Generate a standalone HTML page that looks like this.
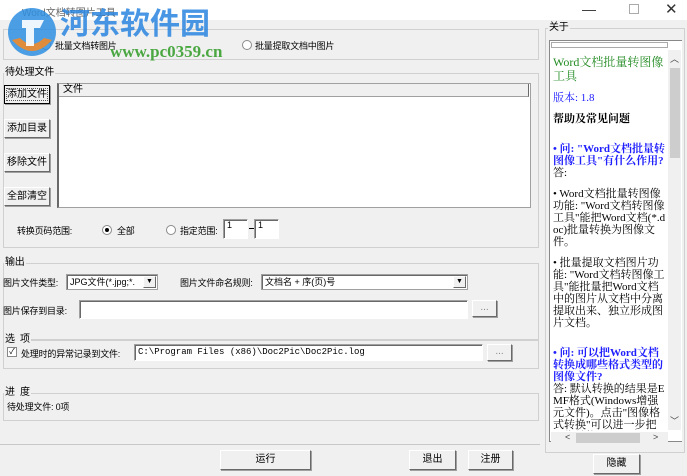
<!DOCTYPE html>
<html><head><meta charset="utf-8"><style>
*{margin:0;padding:0;box-sizing:border-box}
body{width:687px;height:476px;overflow:hidden;background:#f0f0f0;position:relative;font-family:"Liberation Sans","Noto Sans CJK SC",sans-serif;font-size:10px;color:#000}
.a{position:absolute;white-space:nowrap}
.l{font-size:9px;letter-spacing:-0.2px}
.gb{position:absolute;border:1px solid #d0d0d0;}
.gl{position:absolute;background:#f0f0f0;padding:0 1px;font-size:10px;line-height:12px}
.btn{position:absolute;background:#f0f0f0;border:1px solid;border-color:#fff #696969 #696969 #fff;box-shadow:1px 1px 0 #a0a0a0;text-align:center;font-size:10px}
.in{position:absolute;background:#fff;border:1px solid;border-color:#a0a0a0 #fff #fff #a0a0a0;box-shadow:inset 1px 1px 0 #696969;font-size:9px;padding-left:3px}
.rad{position:absolute;width:10px;height:10px;border-radius:50%;background:#fff;border:1px solid #8a8a8a}
.cmb{position:absolute;background:#fff;border:1px solid #a0a0a0;box-shadow:inset 1px 1px 0 #696969;font-size:9px;padding-left:3px;line-height:14px;overflow:hidden}
.dd{position:absolute;right:1px;top:1px;width:13px;height:12px;background:#f0f0f0;border:1px solid;border-color:#fff #696969 #696969 #fff;font-size:7px;line-height:10px;text-align:center}
.rp p{margin:0 0 9px 0}
</style></head><body>
<div class="a" style="left:0;top:0;width:687px;height:20px;background:#fff"></div>
<div class="a" style="left:22px;top:4px;font-size:10px;color:#666">Word文档转图片工具</div>
<div class="a" style="left:582px;top:1px;font-size:14px;color:#333">—</div>
<div class="a" style="left:629px;top:4px;width:10px;height:10px;border:1px solid #aaa"></div>
<div class="a" style="left:665px;top:0px;font-size:15px;color:#333">✕</div>

<div class="gb" style="left:3px;top:29px;width:536px;height:31px"></div>
<div class="rad" style="left:41px;top:40px"></div>
<div class="a l" style="left:55px;top:39px">批量文档转图片</div>
<div class="rad" style="left:242px;top:40px"></div>
<div class="a l" style="left:255px;top:39px">批量提取文档中图片</div>

<div class="gb" style="left:3px;top:73px;width:536px;height:175px"></div>
<div class="gl l" style="left:4px;top:67px">待处理文件</div>
<div class="btn" style="left:4px;top:85px;width:46px;height:19px;border:1px solid #000;line-height:17px"><span style="outline:1px dotted #555">添加文件</span></div>
<div class="btn" style="left:4px;top:119px;width:46px;height:19px;line-height:17px">添加目录</div>
<div class="btn" style="left:4px;top:153px;width:46px;height:19px;line-height:17px">移除文件</div>
<div class="btn" style="left:4px;top:187px;width:46px;height:19px;line-height:17px">全部清空</div>
<div class="a" style="left:57px;top:83px;width:474px;height:125px;background:#fff;border:1px solid #a0a0a0;border-left:2px solid #696969"></div>
<div class="a" style="left:59px;top:84px;width:470px;height:13px;background:#f0f0f0;border-bottom:1px solid #a0a0a0;border-right:1px solid #696969;padding-left:4px;line-height:12px">文件</div>
<div class="a l" style="left:17px;top:224px">转换页码范围:</div>
<div class="rad" style="left:102px;top:225px"><div style="position:absolute;left:2px;top:2px;width:4px;height:4px;border-radius:50%;background:#000"></div></div>
<div class="a l" style="left:117px;top:224px">全部</div>
<div class="rad" style="left:166px;top:225px"></div>
<div class="a l" style="left:180px;top:224px">指定范围:</div>
<div class="in" style="left:223px;top:219px;width:25px;height:20px;font-size:9px">1</div>
<div class="a" style="left:249px;top:228px;width:5px;height:1px;background:#000"></div>
<div class="in" style="left:254px;top:219px;width:25px;height:20px;font-size:9px">1</div>

<div class="gb" style="left:3px;top:263px;width:536px;height:77px"></div>
<div class="gl l" style="left:4px;top:257px">输出</div>
<div class="a l" style="left:3px;top:276px">图片文件类型:</div>
<div class="cmb" style="left:66px;top:274px;width:92px;height:16px">JPG文件(*.jpg;*.<div class="dd">▼</div></div>
<div class="a l" style="left:180px;top:276px">图片文件命名规则:</div>
<div class="cmb" style="left:261px;top:274px;width:207px;height:16px">文档名 + 序(页)号<div class="dd">▼</div></div>
<div class="a l" style="left:3px;top:304px">图片保存到目录:</div>
<div class="in" style="left:79px;top:300px;width:389px;height:19px"></div>
<div class="btn" style="left:472px;top:300px;width:25px;height:17px;line-height:13px;color:#888">...</div>

<div class="gb" style="left:3px;top:340px;width:536px;height:29px"></div>
<div class="gl l" style="left:4px;top:334px">选&nbsp;&nbsp;项</div>
<div class="a" style="left:7px;top:347px;width:10px;height:10px;background:#fff;border:1px solid #888;font-size:8px;line-height:8px;text-align:center">✓</div>
<div class="a l" style="left:21px;top:347px">处理时的异常记录到文件:</div>
<div class="in" style="left:134px;top:344px;width:349px;height:17px;font-family:'Liberation Mono',monospace;font-size:9px;line-height:14px">C:\Program Files (x86)\Doc2Pic\Doc2Pic.log</div>
<div class="btn" style="left:487px;top:344px;width:25px;height:17px;line-height:13px;color:#888">...</div>

<div class="gb" style="left:3px;top:393px;width:536px;height:28px"></div>
<div class="gl l" style="left:4px;top:387px">进&nbsp;&nbsp;度</div>
<div class="a l" style="left:7px;top:400px">待处理文件: 0项</div>

<div class="a" style="left:0;top:444px;width:540px;height:1px;background:#c8c8c8"></div>
<div class="btn" style="left:220px;top:450px;width:91px;height:20px;line-height:18px">运行</div>
<div class="btn" style="left:409px;top:450px;width:47px;height:20px;line-height:18px">退出</div>
<div class="btn" style="left:468px;top:450px;width:45px;height:20px;line-height:18px">注册</div>

<div class="gb" style="left:545px;top:28px;width:140px;height:425px"></div>
<div class="gl l" style="left:548px;top:22px">关于</div>
<div class="a" style="left:549px;top:40px;width:133px;height:402px;border:1px solid #888;border-right:none;background:#fff"></div>
<div class="a" style="left:551px;top:42px;width:117px;height:6px;background:#fff;border:1px solid #aaa"></div>
<div class="a" style="left:668px;top:50px;width:13px;height:380px;background:#f0f0f0"></div>
<div class="a" style="left:670px;top:52px;font-size:9px;color:#444">︿</div>
<div class="a" style="left:670px;top:68px;width:10px;height:90px;background:#cdcdcd"></div>
<div class="a" style="left:670px;top:414px;font-size:9px;color:#444">﹀</div>
<div class="a" style="left:551px;top:432px;width:117px;height:12px;background:#f0f0f0"></div>
<div class="a" style="left:565px;top:432px;font-size:9px;color:#444">&lt;</div>
<div class="a" style="left:576px;top:433px;width:64px;height:10px;background:#cdcdcd"></div>
<div class="a" style="left:653px;top:432px;font-size:9px;color:#444">&gt;</div>
<div class="rp" style="position:absolute;left:553px;top:55px;width:113px;height:376px;overflow:hidden;font-family:'Liberation Serif','Noto Serif CJK SC',serif;font-size:11px;line-height:12px;white-space:normal;word-break:break-all">
<p style="color:#228b22;font-size:12px;line-height:14px">Word文档批量转图像工具</p>
<p style="color:#2020ff">版本: 1.8</p>
<p style="font-weight:bold;margin-bottom:18px">帮助及常见问题</p>
<p><b style="color:#2020ff">• 问: "Word文档批量转图像工具"有什么作用?</b><br>答:</p>
<p>• Word文档批量转图像功能: "Word文档转图像工具"能把Word文档(*.doc)批量转换为图像文件。</p>
<p style="margin-bottom:18px">• 批量提取文档图片功能: "Word文档转图像工具"能批量把Word文档中的图片从文档中分离提取出来、独立形成图片文档。</p>
<p><b style="color:#2020ff">• 问: 可以把Word文档转换成哪些格式类型的图像文件?</b><br>答: 默认转换的结果是EMF格式(Windows增强元文件)。点击"图像格式转换"可以进一步把图像转换为BMP、JPG、PNG</p>
</div>
<div class="btn" style="left:593px;top:454px;width:47px;height:20px;line-height:18px">隐藏</div>

<svg class="a" style="left:4px;top:2px" width="56" height="60" viewBox="0 0 56 60">
<circle cx="28" cy="30" r="24" fill="#2e8fe0" opacity=".85"/>
<path d="M8 38 Q28 60 48 38 L40 36 Q28 48 16 36Z" fill="#f08a2a" opacity=".9"/>
<path d="M18 18 H40 L36 26 H30 V44 H22 V26 H18Z" fill="#fff" opacity=".9"/>
</svg>
<div class="a" style="left:60px;top:4px;font-size:30px;font-weight:bold;color:#2a86e0;opacity:.85;font-family:'Noto Sans CJK SC',sans-serif;line-height:34px">河东软件园</div>
<div class="a" style="left:110px;top:42px;font-size:17px;font-weight:bold;color:#3aa030;opacity:.9;font-family:'Liberation Serif',serif">www.pc0359.cn</div>
</body></html>
